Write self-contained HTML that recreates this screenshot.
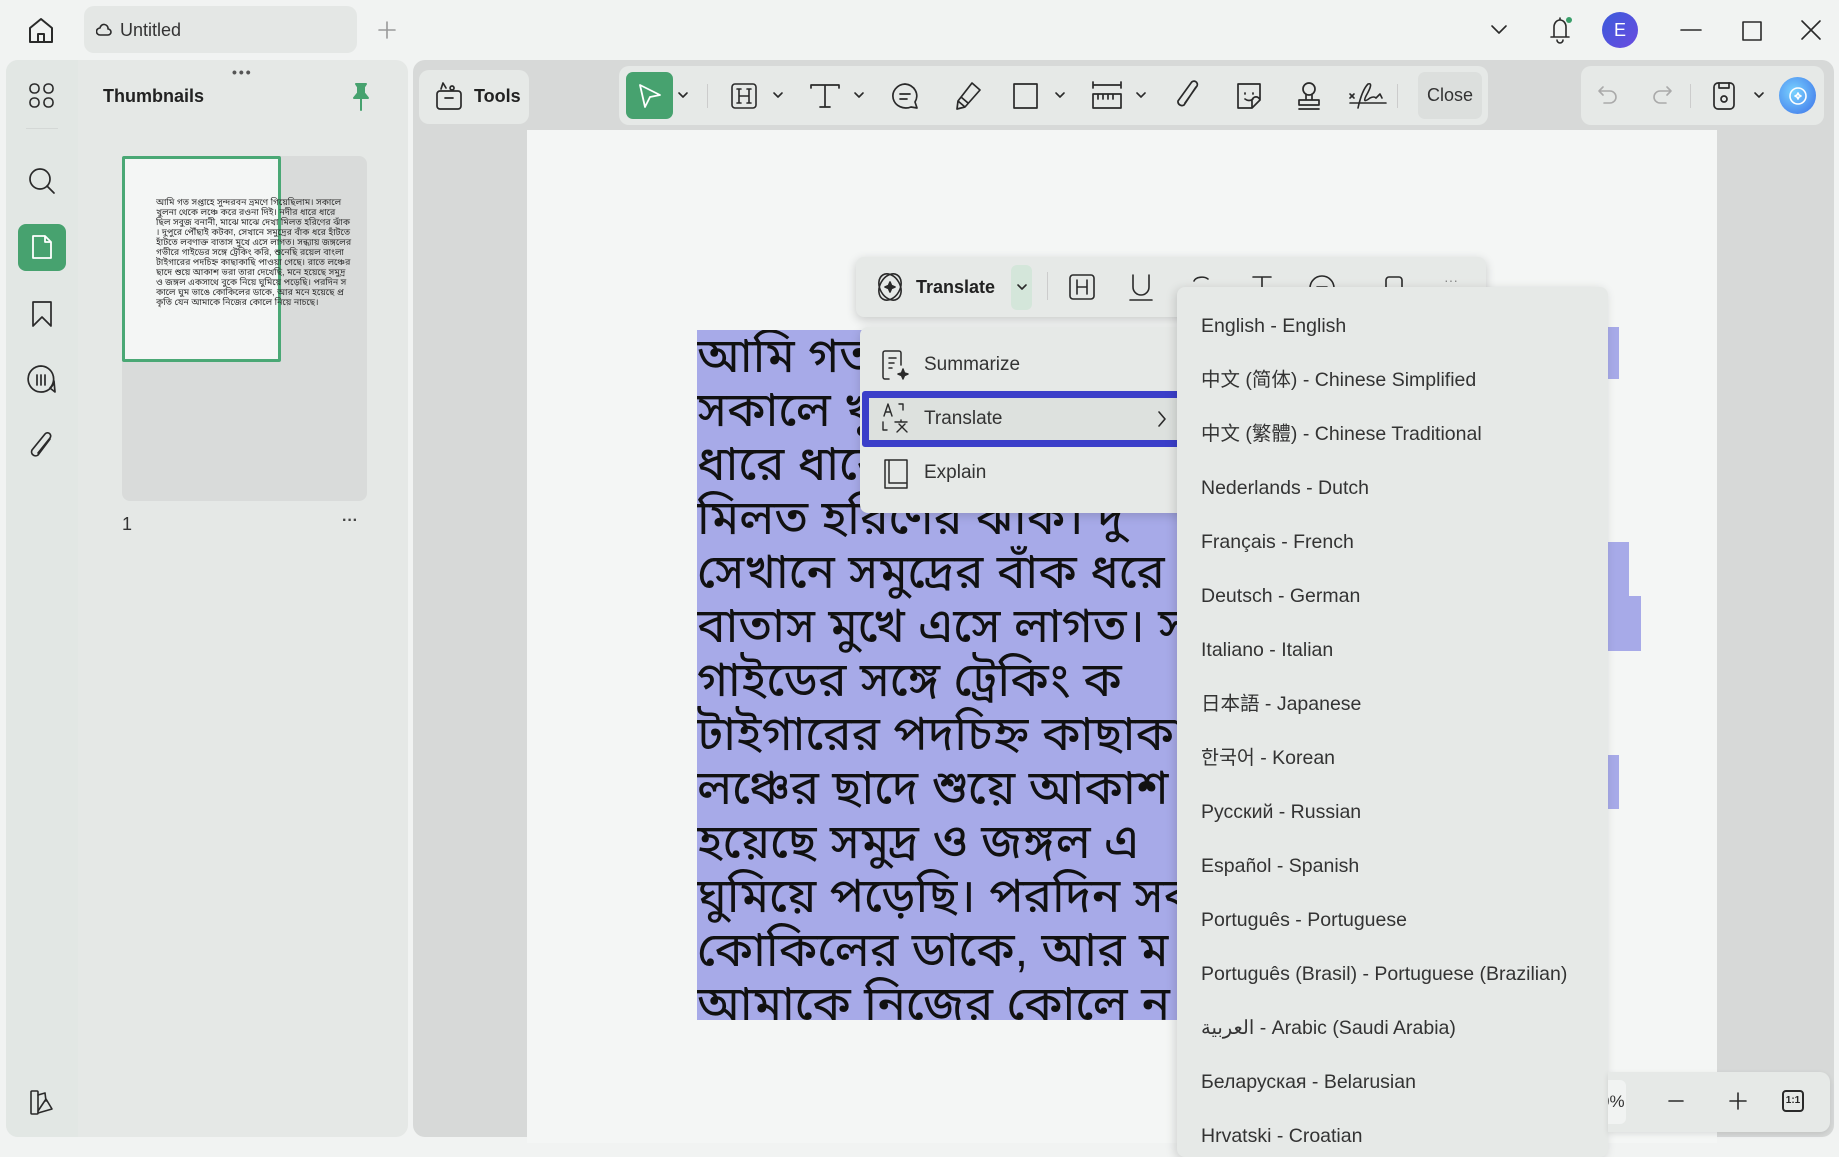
<!DOCTYPE html>
<html><head><meta charset="utf-8"><style>
*{box-sizing:border-box;margin:0;padding:0}
body{width:1839px;height:1143px;overflow:hidden;background:#f1f3f2;font-family:"Liberation Sans","Noto Sans CJK SC",sans-serif;color:#222;position:relative}
.a{position:absolute}
svg{position:absolute;fill:none;stroke:#2a2a2a;stroke-width:2;stroke-linecap:round;stroke-linejoin:round}
.bn{font-family:"Liberation Sans","Noto Sans Bengali","Lohit Bengali","FreeSans",sans-serif}
.lang{position:absolute;left:24px;font-size:19.5px;line-height:24px;height:24px;color:#333;white-space:nowrap}
</style></head><body>
<!-- title bar -->
<svg style="left:28px;top:16px" width="26" height="28" viewBox="0 0 26 28"><path d="M2 12 L13 3 L24 12 V26 H2 Z M10 26 V18 H16 V26"/></svg>
<div class="a" style="left:84px;top:6px;width:273px;height:47px;background:#e4e7e5;border-radius:10px"></div>
<svg style="left:96px;top:22px;stroke-width:1.6" width="16" height="14" viewBox="0 0 16 14"><path d="M4 13 H12 A3 3 0 0 0 12 7 A4 4 0 0 0 4 6 A3.5 3.5 0 0 0 4 13Z"/></svg>
<div class="a" style="left:120px;top:20px;font-size:18px;color:#333">Untitled</div>
<svg style="left:377px;top:20px;stroke:#999;stroke-width:1.6" width="20" height="20"><path d="M10 2 V18 M2 10 H18"/></svg>
<svg style="left:1490px;top:24px;stroke-width:1.6" width="18" height="12"><path d="M2 2 L9 9 L16 2"/></svg>
<svg style="left:1547px;top:15px;stroke-width:1.6" width="26" height="30"><path d="M7 22 V12 A6 7 0 0 1 19 12 V22 Z M4 22 H22 M10 25 A3 3 0 0 0 16 25 M13 3 V5"/></svg>
<div class="a" style="left:1566px;top:17px;width:6px;height:6px;border-radius:50%;background:#3a9f6a"></div>
<div class="a" style="left:1602px;top:12px;width:36px;height:36px;border-radius:50%;background:linear-gradient(135deg,#3b5bdb,#6a4be0);color:#fff;font-size:18px;text-align:center;line-height:36px">E</div>
<svg style="left:1680px;top:20px;stroke-width:1.6" width="22" height="20"><path d="M1 10 H21"/></svg>
<svg style="left:1741px;top:20px;stroke-width:1.6" width="22" height="22"><rect x="2" y="2" width="18" height="18"/></svg>
<svg style="left:1800px;top:19px;stroke-width:1.6" width="22" height="22"><path d="M2 2 L20 20 M20 2 L2 20"/></svg>

<!-- left panels -->
<div class="a" style="left:6px;top:60px;width:402px;height:1077px;background:#e5e8e6;border-radius:12px"></div>
<div class="a" style="left:6px;top:60px;width:72px;height:1077px;background:#e2e7e4;border-radius:12px 0 0 12px"></div>
<div class="a" style="left:232px;top:64px;font-size:14px;color:#555;letter-spacing:2px;font-weight:bold">•••</div>
<svg style="left:28px;top:82px;stroke-width:1.6" width="28" height="28"><rect x="2" y="2" width="9" height="9" rx="4"/><rect x="16" y="2" width="9" height="9" rx="4"/><rect x="2" y="16" width="9" height="9" rx="4"/><rect x="16" y="16" width="9" height="9" rx="4"/></svg>
<div class="a" style="left:26px;top:128px;width:32px;height:1px;background:#d4d8d6"></div>
<svg style="left:27px;top:166px;stroke-width:1.7" width="30" height="30"><circle cx="13" cy="13" r="10"/><path d="M20 20 L27 27"/></svg>
<div class="a" style="left:18px;top:224px;width:48px;height:47px;background:#47a26f;border-radius:8px"></div>
<svg style="left:30px;top:233px;stroke:#fff;stroke-width:1.8" width="24" height="28"><path d="M3 3 H15 L21 9 V25 H3 Z M15 3 V9 H21"/></svg>
<svg style="left:30px;top:299px;stroke-width:1.7" width="24" height="30"><path d="M3 3 H21 V27 L12 18 L3 27 Z"/></svg>
<svg style="left:25px;top:364px;stroke-width:1.7" width="32" height="32"><path d="M16 2 A13 13 0 1 0 29 17 L30 28 L25 24 A13 13 0 0 0 16 2Z M12 11 V21 M16 11 V21 M20 11 V21"/></svg>
<svg style="left:28px;top:431px;stroke-width:1.7" width="28" height="32"><path d="M22 8 L10 24 A4 4 0 0 1 4 19 L17 3 A3 3 0 0 1 22 7 L10 22"/></svg>
<svg style="left:28px;top:1089px;stroke-width:1.6" width="28" height="28"><rect x="3" y="2" width="7" height="23" rx="1"/><path d="M10 6 L17 4 L18 12 M10 24 L24 20 L18 10 L10 22"/></svg>

<div class="a" style="left:103px;top:86px;font-size:18px;font-weight:bold;color:#222">Thumbnails</div>
<svg style="left:350px;top:82px;stroke:#47a26f;fill:#47a26f" width="22" height="30"><path d="M6 2 H16 L14 5 V11 L18 16 H4 L8 11 V5 Z"/><path d="M11 16 V28" style="fill:none;stroke-width:2"/></svg>
<div class="a" style="left:122px;top:156px;width:245px;height:345px;background:#d9dbda;border-radius:8px"></div>
<div class="a" style="left:122px;top:156px;width:159px;height:206px;background:#f4f6f5;border:3px solid #4aa875;border-radius:2px"></div>
<div class="a bn" style="left:156px;top:197px;width:196px;font-size:9px;line-height:10px;color:#333;overflow:hidden;height:140px;word-break:break-all">আমি গত সপ্তাহে সুন্দরবন ভ্রমণে গিয়েছিলাম। সকালে খুলনা থেকে লঞ্চে করে রওনা দিই। নদীর ধারে ধারে ছিল সবুজ বনানী, মাঝে মাঝে দেখা মিলত হরিণের ঝাঁক। দুপুরে পৌঁছাই কটকা, সেখানে সমুদ্রের বাঁক ধরে হাঁটতে হাঁটতে লবণাক্ত বাতাস মুখে এসে লাগত। সন্ধ্যায় জঙ্গলের গভীরে গাইডের সঙ্গে ট্রেকিং করি, শুনেছি রয়েল বাংলা টাইগারের পদচিহ্ন কাছাকাছি পাওয়া গেছে। রাতে লঞ্চের ছাদে শুয়ে আকাশ ভরা তারা দেখেছি, মনে হয়েছে সমুদ্র ও জঙ্গল একসাথে বুকে নিয়ে ঘুমিয়ে পড়েছি। পরদিন সকালে ঘুম ভাঙে কোকিলের ডাকে, আর মনে হয়েছে প্রকৃতি যেন আমাকে নিজের কোলে নিয়ে নাচছে।</div>
<div class="a" style="left:122px;top:514px;font-size:18px;color:#333">1</div>
<div class="a" style="left:342px;top:512px;font-size:16px;color:#444;font-weight:bold">···</div>

<!-- main -->
<div class="a" style="left:413px;top:60px;width:1421px;height:1077px;background:#d7d9d8;border-radius:12px"></div>
<div class="a" style="left:527px;top:130px;width:1190px;height:1013px;background:#f4f6f5"></div>
<div class="a" style="left:419px;top:70px;width:110px;height:54px;background:#e6e9e7;border-radius:10px"></div>
<svg style="left:434px;top:80px;stroke-width:1.7" width="30" height="32"><rect x="3" y="11" width="24" height="18" rx="3"/><path d="M11 18 H19 M7 9 L9 3 L12 8 M18 6 A2 2 0 1 0 18.1 6"/></svg>
<div class="a" style="left:474px;top:86px;font-size:18px;font-weight:bold">Tools</div>
<div class="a" style="left:619px;top:66px;width:869px;height:59px;background:#e6e9e7;border-radius:10px"></div>
<div class="a" style="left:626px;top:72px;width:47px;height:47px;background:#47a26f;border-radius:7px"></div>
<svg style="left:637px;top:82px;stroke:#fff;stroke-width:1.8" width="26" height="28"><path d="M3 3 L23 13 L13 15 L8 25 Z"/></svg>
<svg style="left:677px;top:91px;stroke-width:1.6" width="12" height="8"><path d="M2 2 L6 6 L10 2"/></svg>
<div class="a" style="left:707px;top:84px;width:1px;height:24px;background:#ccc"></div>
<svg style="left:730px;top:82px;stroke-width:1.6" width="28" height="28"><rect x="2" y="2" width="24" height="24" rx="3"/><path d="M9 7 V21 M19 7 V21 M9 14 H19 M7 7 H11 M17 7 H21 M7 21 H11 M17 21 H21"/></svg>
<svg style="left:772px;top:91px;stroke-width:1.6" width="12" height="8"><path d="M2 2 L6 6 L10 2"/></svg>
<svg style="left:809px;top:82px;stroke-width:1.7" width="32" height="28"><path d="M2 6 V3 H30 V6 M16 3 V25 M11 25 H21"/></svg>
<svg style="left:853px;top:91px;stroke-width:1.6" width="12" height="8"><path d="M2 2 L6 6 L10 2"/></svg>
<svg style="left:889px;top:81px;stroke-width:1.7" width="32" height="30"><path d="M16 3 A13 12 0 1 0 22 26 L28 27 L26 21 A13 12 0 0 0 16 3Z M11 13 H21 M11 18 H18"/></svg>
<svg style="left:953px;top:80px;stroke-width:1.7" width="30" height="32"><path d="M19 3 L27 10 L12 27 L4 29 L5 21 Z M5 21 L12 27 M8 17 L15 23"/></svg>
<svg style="left:1012px;top:82px;stroke-width:1.7" width="28" height="28"><rect x="2" y="2" width="23" height="24"/></svg>
<svg style="left:1054px;top:91px;stroke-width:1.6" width="12" height="8"><path d="M2 2 L6 6 L10 2"/></svg>
<svg style="left:1091px;top:80px;stroke-width:1.7" width="32" height="32"><path d="M2 2 V8 M30 2 V8 M2 5 H30 M2 14 H30 V28 H2 Z M7 14 V19 M12 14 V19 M17 14 V19 M22 14 V19"/></svg>
<svg style="left:1135px;top:91px;stroke-width:1.6" width="12" height="8"><path d="M2 2 L6 6 L10 2"/></svg>
<svg style="left:1174px;top:80px;stroke-width:1.7" width="30" height="32"><path d="M22 7 L10 25 A4 4 0 0 1 4 21 L17 3 A3 3 0 0 1 23 6 L11 23"/></svg>
<svg style="left:1234px;top:80px;stroke-width:1.7" width="30" height="32"><path d="M4 4 H26 V20 L18 28 H4 Z M18 28 V22 A3 3 0 0 1 26 20 M11 13 V14 M19 13 V14 M11 19 Q15 22 19 19"/></svg>
<svg style="left:1294px;top:80px;stroke-width:1.7" width="30" height="32"><circle cx="15" cy="9" r="6"/><path d="M12 15 V20 M18 15 V20 M5 20 H25 V25 H5 Z M5 29 H25"/></svg>
<svg style="left:1348px;top:80px;stroke-width:1.6" width="40" height="32"><path d="M2 14 L6 18 M6 14 L2 18 M10 28 Q14 10 20 4 Q26 2 18 16 Q14 24 22 18 Q26 16 28 18 L32 14 L34 18 M2 23 H38"/></svg>
<div class="a" style="left:1397px;top:84px;width:1px;height:24px;background:#ccc"></div>
<div class="a" style="left:1418px;top:72px;width:64px;height:47px;background:#dcdfdd;border-radius:7px;font-size:18px;color:#333;text-align:center;line-height:47px">Close</div>
<div class="a" style="left:1581px;top:66px;width:243px;height:59px;background:#e6e9e7;border-radius:10px"></div>
<svg style="left:1596px;top:84px;stroke:#aaa;stroke-width:1.6" width="24" height="22"><path d="M7 3 L3 7 L7 11 M3 7 H14 A6 6 0 0 1 14 19 H8"/></svg>
<svg style="left:1650px;top:84px;stroke:#aaa;stroke-width:1.6" width="24" height="22"><path d="M17 3 L21 7 L17 11 M21 7 H10 A6 6 0 0 0 10 19 H16"/></svg>
<div class="a" style="left:1690px;top:84px;width:1px;height:24px;background:#ccc"></div>
<svg style="left:1711px;top:80px;stroke-width:1.7" width="26" height="32"><rect x="3" y="3" width="20" height="26" rx="4"/><path d="M8 3 V8 H18 V3"/><circle cx="13" cy="19" r="3"/></svg>
<svg style="left:1753px;top:91px;stroke-width:1.6" width="12" height="8"><path d="M2 2 L6 6 L10 2"/></svg>
<div class="a" style="left:1779px;top:77px;width:37px;height:37px;border-radius:50%;background:radial-gradient(circle at 40% 40%,#7ad3ff,#3a6fe8)"></div>
<svg style="left:1786px;top:84px;stroke:#fff;stroke-width:1.6" width="24" height="24"><circle cx="12" cy="12" r="8"/><path d="M12 9 L13 11 L15 12 L13 13 L12 15 L11 13 L9 12 L11 11Z"/></svg>

<!-- selected text -->
<div class="a bn" style="left:697px;top:330px;width:480px;height:690px;background:#a7aae8;font-size:48px;line-height:54px;color:#111;white-space:nowrap;overflow:hidden">আমি গত সপ্তাহে<br>সকালে খুলনা<br>ধারে ধারে ছিল<br>মিলত হরিণের ঝাঁক। দু<br>সেখানে সমুদ্রের বাঁক ধরে<br>বাতাস মুখে এসে লাগত। স<br>গাইডের সঙ্গে ট্রেকিং ক<br>টাইগারের পদচিহ্ন কাছাকা<br>লঞ্চের ছাদে শুয়ে আকাশ<br>হয়েছে সমুদ্র ও জঙ্গল এ<br>ঘুমিয়ে পড়েছি। পরদিন সক<br>কোকিলের ডাকে, আর ম<br>আমাকে নিজের কোলে ন</div>
<div class="a" style="left:1608px;top:327px;width:11px;height:52px;background:#a7aae8"></div>
<div class="a" style="left:1608px;top:542px;width:21px;height:54px;background:#a7aae8"></div>
<div class="a" style="left:1608px;top:596px;width:33px;height:55px;background:#a7aae8"></div>
<div class="a" style="left:1608px;top:755px;width:11px;height:54px;background:#a7aae8"></div>

<!-- floating toolbar -->
<div class="a" style="left:856px;top:257px;width:630px;height:60px;background:#e6e9e7;border-radius:8px;box-shadow:0 3px 10px rgba(0,0,0,.18)"></div>
<svg style="left:872px;top:269px;stroke-width:1.6" width="36" height="36"><ellipse cx="18" cy="18" rx="14" ry="10" transform="rotate(60 18 18)"/><ellipse cx="18" cy="18" rx="14" ry="10" transform="rotate(-60 18 18)"/><path d="M18 13 L19.5 16.5 L23 18 L19.5 19.5 L18 23 L16.5 19.5 L13 18 L16.5 16.5Z" style="fill:#2a2a2a"/></svg>
<div class="a" style="left:916px;top:277px;font-size:18px;font-weight:bold">Translate</div>
<div class="a" style="left:1011px;top:265px;width:21px;height:45px;background:#d4e6da;border-radius:6px"></div>
<svg style="left:1016px;top:283px;stroke-width:1.6" width="12" height="8"><path d="M2 2 L6 6 L10 2"/></svg>
<div class="a" style="left:1047px;top:272px;width:1px;height:28px;background:#ccc"></div>
<svg style="left:1068px;top:273px;stroke-width:1.6" width="28" height="28"><rect x="2" y="2" width="24" height="24" rx="3"/><path d="M9 7 V21 M19 7 V21 M9 14 H19"/></svg>
<svg style="left:1128px;top:273px;stroke-width:1.6" width="26" height="30"><path d="M5 2 V14 A8 8 0 0 0 21 14 V2 M2 27 H24"/></svg>
<svg style="left:1188px;top:273px;stroke-width:1.6" width="26" height="30"><path d="M20 6 A8 5 0 0 0 6 8"/></svg>
<svg style="left:1249px;top:273px;stroke-width:1.6" width="26" height="30"><path d="M4 4 H22 M13 4 V28"/></svg>
<svg style="left:1307px;top:273px;stroke-width:1.6" width="30" height="30"><circle cx="15" cy="15" r="12"/><path d="M10 14 H20"/></svg>
<svg style="left:1380px;top:273px;stroke-width:1.6" width="30" height="30"><rect x="6" y="4" width="16" height="22" rx="3"/></svg>
<div class="a" style="left:1444px;top:272px;font-size:14px;color:#888">···</div>

<!-- context menu -->
<div class="a" style="left:860px;top:327px;width:330px;height:186px;background:#e6e9e7;border-radius:8px;box-shadow:0 3px 10px rgba(0,0,0,.15)"></div>
<svg style="left:881px;top:349px;stroke-width:1.5" width="32" height="34"><path d="M20 16 V4 A2 2 0 0 0 18 2 H4 A2 2 0 0 0 2 4 V28 A2 2 0 0 0 4 30 H8 M8 9 H15 M8 14 H13 M8 19 H11"/><path d="M22 20 L23.5 24 L27 25 L23.5 26.5 L22 30 L20.5 26.5 L17 25 L20.5 24Z" style="fill:#2a2a2a"/></svg>
<div class="a" style="left:924px;top:354px;font-size:19px;color:#333">Summarize</div>
<div class="a" style="left:862px;top:391px;width:325px;height:56px;border:7px solid #3b3fc9;border-radius:3px;background:#dde1de"></div>
<svg style="left:881px;top:402px;stroke-width:1.4" width="30" height="32"><path d="M3 14 L7 2 L11 14 M4.5 10 H9.5 M18 2 H22 V8 M2 20 V28 H6 M14 20 H26 M20 18 V20 M16 30 L24 22 M18 22 L26 30"/></svg>
<div class="a" style="left:924px;top:408px;font-size:19px;color:#333">Translate</div>
<svg style="left:1157px;top:410px;stroke-width:1.6" width="10" height="18"><path d="M2 2 L8 9 L2 16"/></svg>
<svg style="left:881px;top:457px;stroke-width:1.5" width="30" height="34"><path d="M4 3 H26 V31 H4 Z M8 3 V26 H26 M4 31 V26"/></svg>
<div class="a" style="left:924px;top:462px;font-size:19px;color:#333">Explain</div>

<!-- language submenu -->
<div class="a" style="left:1177px;top:287px;width:431px;height:870px;background:#e6e9e7;border-radius:8px;box-shadow:-2px 2px 10px rgba(0,0,0,.15)">
<div class="lang" style="top:27px">English - English</div>
<div class="lang" style="top:81px">中文 (简体) - Chinese Simplified</div>
<div class="lang" style="top:135px">中文 (繁體) - Chinese Traditional</div>
<div class="lang" style="top:189px">Nederlands - Dutch</div>
<div class="lang" style="top:243px">Français - French</div>
<div class="lang" style="top:297px">Deutsch - German</div>
<div class="lang" style="top:351px">Italiano - Italian</div>
<div class="lang" style="top:405px">日本語 - Japanese</div>
<div class="lang" style="top:459px">한국어 - Korean</div>
<div class="lang" style="top:513px">Русский - Russian</div>
<div class="lang" style="top:567px">Español - Spanish</div>
<div class="lang" style="top:621px">Português - Portuguese</div>
<div class="lang" style="top:675px">Português (Brasil) - Portuguese (Brazilian)</div>
<div class="lang" style="top:729px">العربية - Arabic (Saudi Arabia)</div>
<div class="lang" style="top:783px">Беларуская - Belarusian</div>
<div class="lang" style="top:837px">Hrvatski - Croatian</div>
</div>

<!-- zoom bar -->
<div class="a" style="left:1608px;top:1072px;width:222px;height:60px;background:#e6e9e7;border-radius:0 10px 10px 0;box-shadow:0 2px 6px rgba(0,0,0,.1)"></div>
<div class="a" style="left:1608px;top:1080px;width:18px;height:44px;background:#f1f3f2;border-radius:0 6px 6px 0;font-size:17px;line-height:44px;color:#333;overflow:hidden;text-indent:-8px">0%</div>
<svg style="left:1667px;top:1092px;stroke-width:1.6" width="18" height="18"><path d="M2 9 H16"/></svg>
<svg style="left:1728px;top:1091px;stroke-width:1.6" width="20" height="20"><path d="M10 2 V18 M2 10 H18"/></svg>
<div class="a" style="left:1782px;top:1090px;width:22px;height:22px;border:2px solid #2a2a2a;border-radius:4px;font-size:10px;font-weight:bold;text-align:center;line-height:18px">1:1</div>
</body></html>
